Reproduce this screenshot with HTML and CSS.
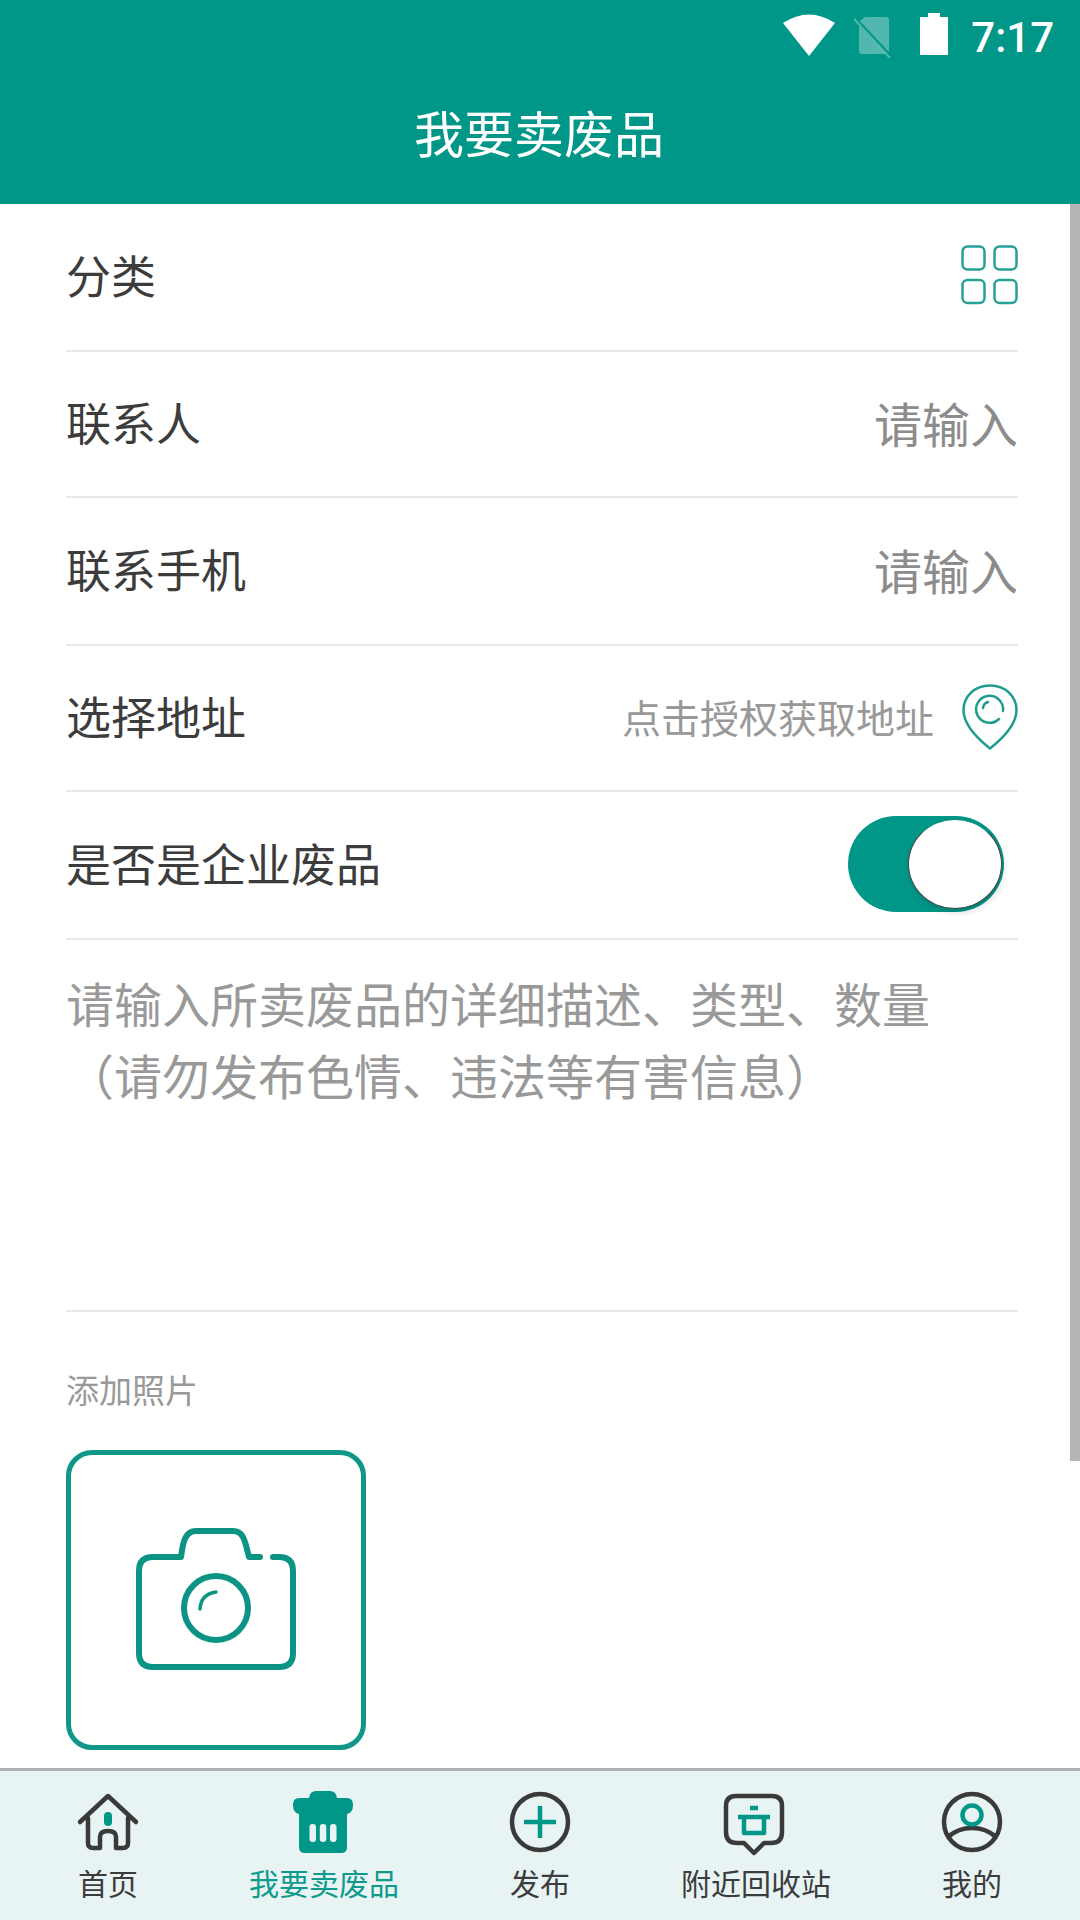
FILE: index.html
```html
<!DOCTYPE html>
<html lang="zh-CN">
<head>
    <meta charset="UTF-8">
    <meta name="viewport" content="width=device-width, initial-scale=1.0">
    <title>我要卖废品</title>
    <link rel="stylesheet" href="styles.css">
</head>
<body>
    <header class="app-header">
        <div class="status-bar">
            <svg class="icon-wifi" width="52" height="42" viewBox="0 0 52 42"><path d="M0 9 Q26 -8 52 9 L26 42 Z" fill="#fff"/></svg>
            <svg class="icon-sim" width="38" height="42" viewBox="0 0 38 42">
                <path d="M5 6 L11 1 L32 1 Q35 1 35 4 L35 35 Q35 38 32 38 L8 38 Q5 38 5 35 Z" fill="#fff" opacity="0.32"/>
                <path d="M1 3 L37 41" stroke="#009688" stroke-width="4"/>
                <path d="M0 3 L36 42" stroke="#fff" stroke-width="2" opacity="0.32"/>
            </svg>
            <svg class="icon-battery" width="28" height="42" viewBox="0 0 28 42"><path d="M8 0 H20 V4 H28 V42 H0 V4 H8 Z" fill="#fff"/></svg>
            <span class="clock">7:17</span>
        </div>
        <h1>我要卖废品</h1>
    </header>

    <main class="form-page">
        <div class="row row-tall">
            <span class="row-label">分类</span>
            <svg class="icon-grid" width="58" height="60" viewBox="0 0 58 60" fill="none" stroke="#26a295" stroke-width="2.5">
                <rect x="2.5" y="1.5" width="22" height="23" rx="5"/>
                <rect x="34.5" y="1.5" width="22" height="23" rx="5"/>
                <rect x="2.5" y="35" width="22" height="23" rx="5"/>
                <rect x="34.5" y="35" width="22" height="23" rx="5"/>
            </svg>
        </div>
        <div class="row">
            <span class="row-label">联系人</span>
            <span class="row-value">请输入</span>
        </div>
        <div class="row row-tall">
            <span class="row-label">联系手机</span>
            <span class="row-value">请输入</span>
        </div>
        <div class="row">
            <span class="row-label">选择地址</span>
            <div class="address">
                <span class="address-text">点击授权获取地址</span>
                <svg class="icon-pin" width="56" height="66" viewBox="0 0 56 66" fill="none" stroke="#1f9c8f" stroke-width="2.5" stroke-linecap="round">
                    <path d="M28 1.5 C12 1.5 1.5 13 1.5 26 C1.5 40 16 55 28 64.5 C40 55 54.5 40 54.5 26 C54.5 13 44 1.5 28 1.5 Z"/>
                    <path d="M37 35 A13.5 13.5 0 1 1 41 27"/>
                    <path d="M21 24 A7 7 0 0 1 26 18"/>
                </svg>
            </div>
        </div>
        <div class="row row-tall">
            <span class="row-label">是否是企业废品</span>
            <div class="toggle"><div class="toggle-knob"></div></div>
        </div>
        <div class="description">
            请输入所卖废品的详细描述、类型、数量<br>
            <span class="description-note">（请勿发布色情、违法等有害信息）</span>
        </div>
        <div class="photo-title">添加照片</div>
        <div class="photo-add">
            <svg width="160" height="142" viewBox="0 0 160 142" fill="none" stroke="#0b9484" stroke-width="6" stroke-linecap="round" stroke-linejoin="round">
                <path d="M124 29 H113 C109 14 108 3 97 3 H60 C49 3 47 14 45 29 H17 Q3 29 3 43 V125 Q3 139 17 139 H143 Q157 139 157 125 V43 Q157 29 143 29 H137"/>
                <circle cx="80" cy="80" r="32"/>
                <path d="M64 81 Q65 66 80 64" stroke-width="3.5"/>
            </svg>
        </div>
    </main>

    <div class="scroll-thumb"></div>

    <nav class="tab-bar">
        <div class="tab">
            <svg width="64" height="64" viewBox="0 0 64 64" fill="none" stroke="#3a3a3a" stroke-width="4.5" stroke-linecap="round" stroke-linejoin="round">
                <path d="M4 32 L32 6 L60 32"/>
                <path d="M12 28 V53 Q12 58 17 58 H24 V47 Q24 41 32 41 Q40 41 40 47 V58 H47 Q52 58 52 53 V28"/>
                <rect x="28" y="22" width="8" height="14" rx="4" fill="#009688" stroke="none"/>
            </svg>
            <span>首页</span>
        </div>
        <div class="tab tab-active">
            <svg class="icon-trash" width="64" height="64" viewBox="0 0 64 64">
                <path d="M25 1 H39 Q45 1 46 8 H56 Q62 8 62 15 Q62 23 56 24 V57 Q56 63 50 63 H14 Q8 63 8 57 V24 Q2 23 2 15 Q2 8 8 8 H18 Q19 1 25 1 Z" fill="#009688"/>
                <g fill="#e8f4f4">
                    <rect x="18.5" y="34" width="6.5" height="18" rx="3"/>
                    <rect x="28.8" y="34" width="6.5" height="18" rx="3"/>
                    <rect x="39" y="34" width="6.5" height="18" rx="3"/>
                </g>
            </svg>
            <span>我要卖废品</span>
        </div>
        <div class="tab">
            <svg width="64" height="64" viewBox="0 0 64 64" fill="none" stroke-width="4.5">
                <circle cx="32" cy="32" r="28" stroke="#3a3a3a"/>
                <path d="M32 16 V48 M16 32 H48" stroke="#009688"/>
            </svg>
            <span>发布</span>
        </div>
        <div class="tab">
            <svg class="icon-station" width="64" height="68" viewBox="0 0 64 68" fill="none" stroke-width="4.5" stroke-linejoin="round">
                <path d="M14 6 H50 Q60 6 60 16 V42 Q60 53 49 53 H42 L32 63 L22 53 H15 Q4 53 4 42 V16 Q4 6 14 6 Z" stroke="#3a3a3a"/>
                <path d="M28 18 H36 M16 27 H48 M22 27 V43 H42 V27" stroke="#009688"/>
            </svg>
            <span>附近回收站</span>
        </div>
        <div class="tab">
            <svg width="64" height="64" viewBox="0 0 64 64" fill="none" stroke-width="4.5">
                <circle cx="32" cy="32" r="28" stroke="#3a3a3a"/>
                <path d="M8 47 Q18 38 32 38 Q46 38 56 47" stroke="#3a3a3a"/>
                <circle cx="32" cy="25" r="9.5" stroke="#009688"/>
            </svg>
            <span>我的</span>
        </div>
    </nav>
</body>
</html>
```

FILE: styles.css
```css
* {
    box-sizing: border-box;
}
body {
    font-family: "Noto Sans CJK SC", "Noto Sans", sans-serif;
    background-color: white;
    color: #3c3c3c;
    margin: 0;
    width: 1080px;
    height: 1920px;
    overflow: hidden;
    display: flex;
    flex-direction: column;
    position: relative;
}
.app-header {
    background-color: #009688;
    color: white;
    height: 204px;
    flex-shrink: 0;
}
.status-bar {
    height: 72px;
    padding: 13px 26px 0 0;
    display: flex;
    justify-content: flex-end;
    align-items: flex-start;
}
.icon-wifi {
    margin-top: 1px;
    margin-right: 19px;
}
.icon-sim {
    margin-top: 3px;
    margin-right: 28px;
}
.clock {
    font-family: Roboto, sans-serif;
    font-size: 42px;
    font-weight: 500;
    line-height: 47px;
    margin-top: 1px;
    margin-left: 23px;
}
h1 {
    margin: 0;
    font-size: 50px;
    font-weight: 400;
    line-height: 72px;
    text-align: center;
    padding: 23px 2px 0 0;
}
.form-page {
    flex: 1;
    padding: 0 62px 0 66px;
    overflow: hidden;
}
.row {
    height: 146px;
    padding-bottom: 5px;
    border-bottom: 2px solid #e8e8e8;
    display: flex;
    justify-content: space-between;
    align-items: center;
}
.row-tall {
    height: 148px;
}
.row-label {
    font-size: 45px;
}
.row-value {
    font-size: 48px;
    color: #8c8c8c;
}
.address {
    display: flex;
    align-items: center;
    gap: 28px;
}
.address-text {
    font-size: 39px;
    color: #999;
}
.icon-pin {
    margin-top: 2px;
}
.toggle {
    width: 156px;
    height: 96px;
    margin-top: 2px;
    margin-right: 14px;
    border-radius: 48px;
    background-color: #009688;
    display: flex;
    justify-content: flex-end;
    align-items: center;
    padding-right: 2px;
}
.toggle-knob {
    width: 94px;
    height: 90px;
    border-radius: 50%;
    background-color: white;
    border: 1px solid #444;
    border-top-color: #0a8f80;
    box-shadow: 2px 4px 6px rgba(0,0,0,0.12);
}
.description {
    height: 372px;
    padding-top: 26px;
    border-bottom: 2px solid #e8e8e8;
    font-size: 48px;
    line-height: 72px;
    color: #999;
}
.photo-title {
    margin-top: 59px;
    font-size: 33px;
    line-height: 36px;
    color: #999;
}
.photo-add {
    width: 300px;
    height: 300px;
    margin-top: 43px;
    padding-bottom: 2px;
    border: 5px solid #0f9888;
    border-radius: 26px;
    display: flex;
    justify-content: center;
    align-items: center;
}
.scroll-thumb {
    position: absolute;
    top: 204px;
    right: 0;
    width: 10px;
    height: 1257px;
    background-color: #b5b5b5;
}
.tab-bar {
    height: 152px;
    flex-shrink: 0;
    background-color: #e8f4f4;
    border-top: 3px solid #b0b0b0;
    display: flex;
    padding-top: 19px;
}
.tab {
    width: 216px;
    display: flex;
    flex-direction: column;
    align-items: center;
    font-size: 30px;
    line-height: 40px;
    color: #3c3c3c;
    gap: 8px;
}
.tab-active {
    color: #0f9a8b;
}
.icon-trash {
    margin-right: 3px;
}
.icon-station {
    margin-right: 5px;
    margin-bottom: -4px;
}
```
